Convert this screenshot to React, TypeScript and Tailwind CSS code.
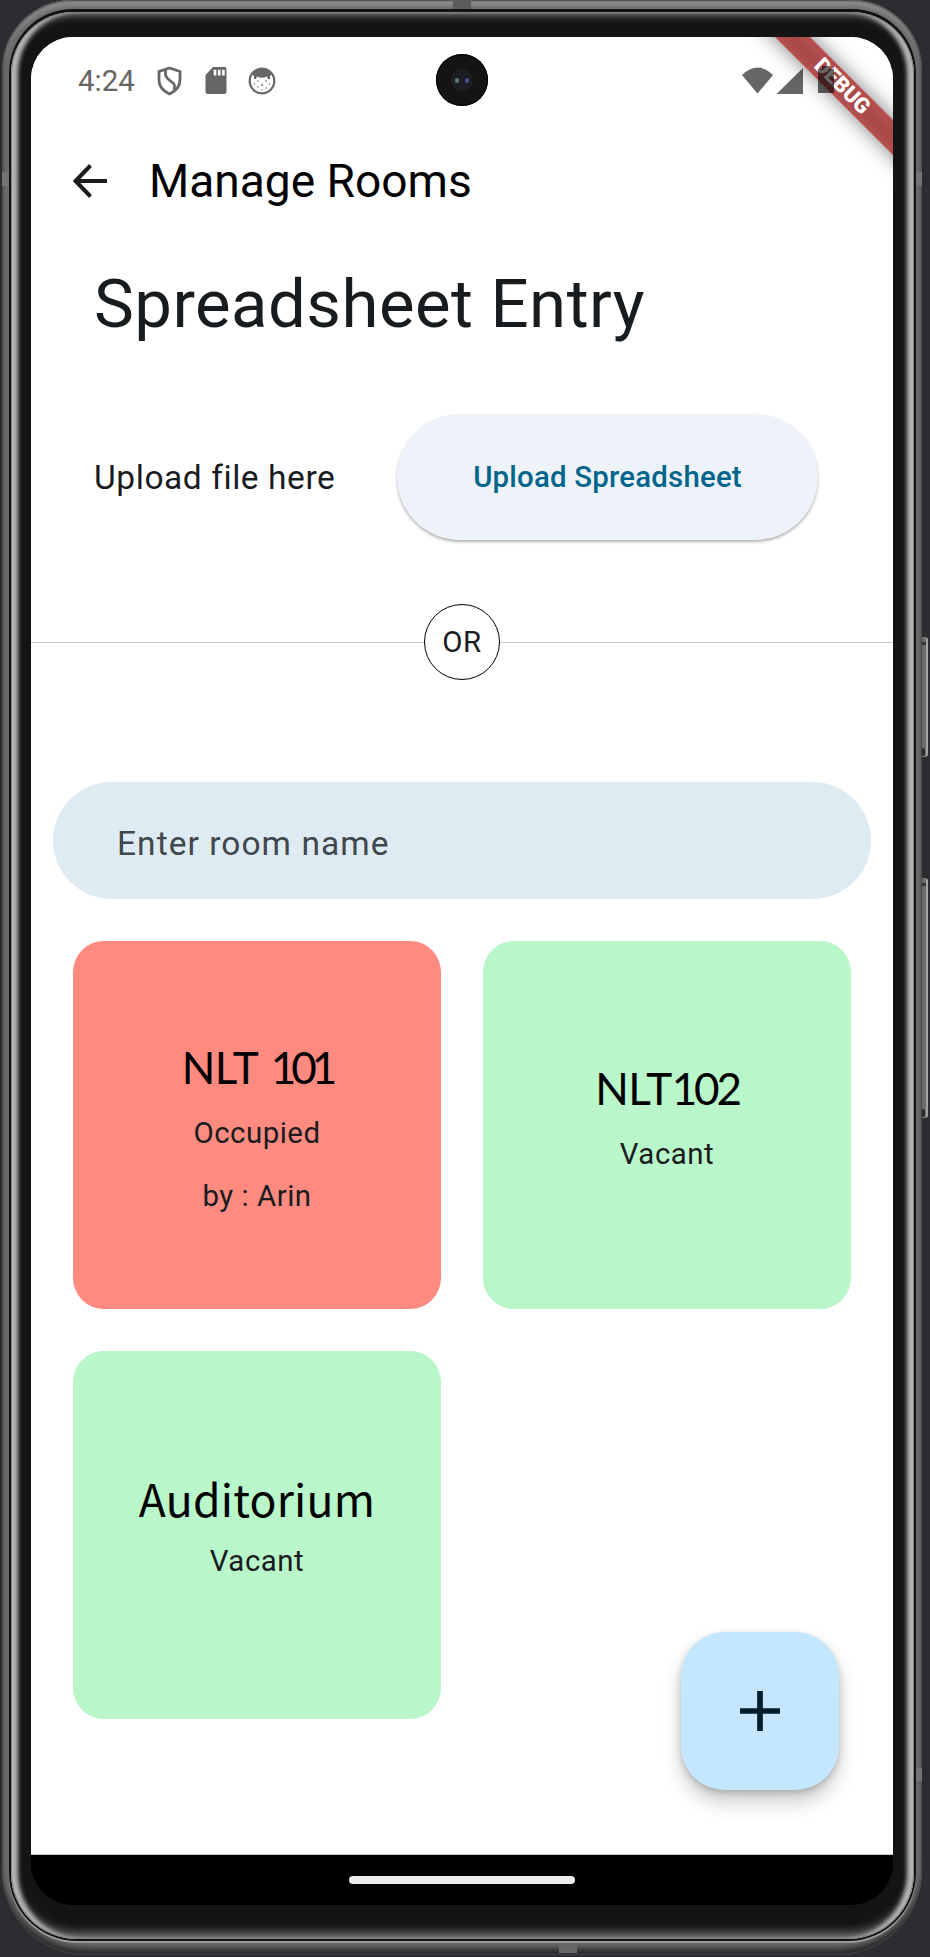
import React from "react";

type Room = { parts: { text: string; className: string }[]; lines: string[]; busy?: boolean; face: string };

const nlt = "font-['Lato',sans-serif] text-[44px] leading-[65px] h-[79px] pt-[2px]";
const rooms: Room[] = [
  {
    parts: [
      { text: "NLT ", className: "tracking-[-0.5px] whitespace-pre mr-[3px]" },
      { text: "101", className: "tracking-[-5px]" },
    ],
    lines: ["Occupied", "by : Arin"],
    busy: true,
    face: nlt,
  },
  {
    parts: [
      { text: "NLT", className: "tracking-[-0.5px]" },
      { text: "102", className: "tracking-[-3.2px]" },
    ],
    lines: ["Vacant"],
    face: nlt,
  },
  {
    parts: [{ text: "Auditorium", className: "tracking-[0.2px]" }],
    lines: ["Vacant"],
    face: "font-['Noto_Sans_CJK_SC',sans-serif] text-[44.5px] leading-[62px] h-[73px]",
  },
];

function StatusBar() {
  return (
    <div className="flex h-[87px] items-center text-[#666] shrink-0">
      <span className="ml-[47px] w-[60px] text-[29.5px] leading-none whitespace-nowrap pt-[2px]">4:24</span>
      <svg className="ml-[19px]" width="25" height="30" viewBox="0 0 25 30" fill="none" stroke="currentColor" strokeWidth="2.8">
        <path d="M12.5 2 L23 5.500 V14 Q23 23 12.5 28 Q2 23 2 14 V5.500 Z" />
        <path d="M8.500 4 V8 Q8.500 11 11 13 L16 17 Q18.500 19 17 24" />
      </svg>
      <svg className="ml-[23px]" width="22" height="28" viewBox="0 0 22 28">
        <path fill="currentColor" d="M8 0H19.5Q21.5 0 21.5 2V25Q21.5 27 19.5 27H2.5Q.5 27 .5 25V8Z" />
        <path stroke="white" strokeWidth="2.600" d="M10 2.8V8.5M14.200 2.8V8.5M18.400 2.8V8.5" />
      </svg>
      <svg className="ml-[21px]" width="28" height="28" viewBox="0 0 28 28">
        <circle cx="14" cy="14" r="12.300" fill="none" stroke="currentColor" strokeWidth="2.2" />
        <path fill="currentColor" d="M4 7Q14-3 24 7L22 9 22 12 20 12 19 9.500Q14 12 9 9.500L8 12 6 12 6 9Z" />
        <g fill="currentColor">
          <circle cx="10" cy="14" r="0.8" />
          <circle cx="18" cy="14" r="0.8" />
          <circle cx="6.500" cy="17" r="0.7" />
          <circle cx="21.500" cy="17" r="0.7" />
          <circle cx="14" cy="18" r="0.9" />
          <circle cx="10" cy="20" r="0.7" />
          <circle cx="18" cy="21" r="0.7" />
          <circle cx="14" cy="23" r="0.7" />
        </g>
      </svg>
      <svg className="ml-auto mr-[90px]" width="61" height="28" viewBox="0 0 61 28" fill="currentColor">
        <path d="M0 8Q15.5-7 31 8L15.5 26.5Z" />
        <path d="M34.500 27L61 1V27Z" />
      </svg>
    </div>
  );
}

function RoomCard({ room }: { room: Room }) {
  return (
    <div className={`flex h-[368px] flex-col items-center justify-center rounded-[31px] ${room.busy ? "bg-[#ff8a80]" : "bg-[#b9f6ca] pb-[21px]"}`}>
      <div className={`flex whitespace-nowrap text-black ${room.face}`}>
        {room.parts.map((part) => <span key={part.text} className={part.className}>{part.text}</span>)}
      </div>
      {room.lines.map((line, i) => (
        <div key={line} className={`text-[29.4px] leading-[42px] tracking-[0.52px] whitespace-nowrap ${i ? "mt-[21px]" : ""}`}>{line}</div>
      ))}
    </div>
  );
}

function SideButton({ className }: { className: string }) {
  return (
    <div className={`absolute left-[919px] flex w-[9px] flex-col justify-between rounded-r-[3px] border border-[#777] border-r-2 border-r-[#a5a5a5] bg-[#6b6b6b] ${className}`}>
      <div className="mt-[4px] ml-[2px] h-[3px] w-[4px] bg-[#333]" />
      <div className="h-[8px] w-[5px] rounded-[2px] bg-[#2c2c2c]" />
    </div>
  );
}

export default function App() {
  return (
    <div className="relative h-[1957px] w-[930px] overflow-hidden bg-[#2b2d31] font-['Roboto',sans-serif] text-[#191c1e]">
      <SideButton className="top-[637px] h-[120px]" />
      <SideButton className="top-[878px] h-[240px]" />
      <div className="relative ml-[2px] h-[1955px] w-[920px] rounded-t-[70px] rounded-b-[84px] bg-[#6a6a6a] px-[7px] pt-[9px] pb-[14px] shadow-[inset_0_0_2px_1px_#444,inset_0_8px_5px_-2px_#8e8e8e,inset_0_-9px_7px_-3px_#222]">
        <div className="absolute top-0 left-[451px] h-[9px] w-[18px] bg-[#5c5c5c]" />
        <div className="absolute bottom-[2px] left-[557px] h-[11px] w-[18px] bg-[#666]" />
        <div className="absolute top-[172px] left-0 h-[14px] w-[7px] bg-[#747474]" />
        <div className="absolute top-[172px] right-0 h-[14px] w-[6px] bg-[#747474]" />
        <div className="absolute top-[1768px] right-0 h-[13px] w-[6px] bg-[#747474]" />
        <div className="relative h-[1932px] w-[907px] rounded-t-[64px] rounded-b-[68px] bg-[#111] pt-[3px] pr-[2px] pb-[2px] pl-[2px] shadow-[0_2px_0_0_#9a9a9a]">
          <div className="h-full rounded-t-[62px] rounded-b-[66px] bg-[#141414] pt-[25px] pl-[20px] shadow-[inset_0_0_0_1px_#808080,inset_8px_0_4px_-1px_#b4b4b4,inset_-8px_0_4px_-1px_#b4b4b4,inset_0_4px_8px_-1px_#7a7a7a,inset_0_-7px_11px_-2px_#8a8a8a]">
            <div className="relative flex h-[1868px] w-[862px] flex-col overflow-hidden rounded-[42px] bg-[linear-gradient(white_90%,black_90%)]">
              <div className="flex min-h-0 flex-1 flex-col bg-white">
                <StatusBar />
                <div className="flex h-[114px] shrink-0 items-center">
                  <svg className="ml-[42px]" width="34" height="34" viewBox="0 0 34 34" fill="none" stroke="currentColor" strokeWidth="4">
                    <path d="M17.500 1.500L2.500 17 17.500 32.500M2.500 17H34" />
                  </svg>
                  <h1 className="ml-[42px] text-[46.100px] leading-none whitespace-nowrap text-black">Manage Rooms</h1>
                </div>
                <h2 className="mt-[24px] ml-[63px] text-[67.100px] leading-[84px] tracking-[0.470px] whitespace-nowrap">Spreadsheet Entry</h2>
                <div className="mt-[67px] flex h-[127px] shrink-0 items-center">
                  <span className="ml-[63px] w-[303px] pt-[3px] text-[33.500px] tracking-[0.570px] whitespace-nowrap">Upload file here</span>
                  <button className="h-[126px] w-[421px] rounded-full bg-[#eef3fa] pt-[2px] text-[29.400px] font-medium tracking-[0.210px] whitespace-nowrap text-[#00658b] shadow-[0_2px_3px_rgba(0,0,0,0.300)]">Upload Spreadsheet</button>
                </div>
                <div className="mt-[64px] flex h-[76px] shrink-0 items-center">
                  <div className="h-px flex-1 bg-[#c9c9c9]" />
                  <div className="flex size-[76px] items-center justify-center rounded-full border border-black text-[29.400px] tracking-[0.500px]">OR</div>
                  <div className="h-px flex-1 bg-[#c9c9c9]" />
                </div>
                <div className="mx-[22px] mt-[102px] flex h-[117px] shrink-0 items-center rounded-full bg-[#deebf3] pt-[7px] pl-[64px] text-[33.500px] tracking-[1.050px] text-[#40484d]">Enter room name</div>
                <div className="mx-[42px] mt-[42px] grid grid-cols-2 gap-[42px]">
                  {rooms.map((room) => <RoomCard key={room.parts.map((p) => p.text).join("")} room={room} />)}
                </div>
              </div>
              <div className="flex h-[51px] shrink-0 items-center justify-center border-t border-[#ccc] bg-black">
                <div className="h-[8px] w-[226px] rounded-full bg-[#ebebeb]" />
              </div>
              <button className="absolute top-[1595px] left-[650px] flex size-[158px] items-center justify-center rounded-[44px] bg-[#c4e7ff] shadow-[0_12px_20px_rgba(0,0,0,0.200),0_3px_6px_rgba(0,0,0,0.180)]">
                <svg width="40" height="40" viewBox="0 0 40 40" stroke="#001e2c" strokeWidth="5.700"><path d="M20 0V40M0 20H40" /></svg>
              </button>
              <div className="absolute top-[17px] left-[405px] flex size-[52px] items-center justify-center rounded-full bg-[#141414] shadow-[inset_0_0_0_1px_#000]">
                <div className="flex size-[22px] items-center justify-center gap-[6px] rounded-full bg-[#1d1e20]">
                  <i className="h-[5px] w-[4px] rounded-full bg-[#527d80]" />
                  <i className="h-[5px] w-[4px] rounded-full bg-[#454f91]" />
                </div>
              </div>
              <div className="absolute top-[37px] left-[701px] flex h-[25px] w-[220px] rotate-45 items-center justify-center bg-linear-to-b from-[#b55050] via-[#a84848] to-[#b55050] text-[21.500px] font-black text-white shadow-[0_0_20px_rgba(0,0,0,0.500)]">DEBUG</div>
              <svg className="absolute top-[29px] left-[787px]" width="16" height="27" viewBox="0 0 16 27">
                <path fill="black" fillOpacity="0.6" d="M0 3H4V0H12V3H16V27H0Z" />
              </svg>
            </div>
          </div>
        </div>
      </div>
    </div>
  );
}
